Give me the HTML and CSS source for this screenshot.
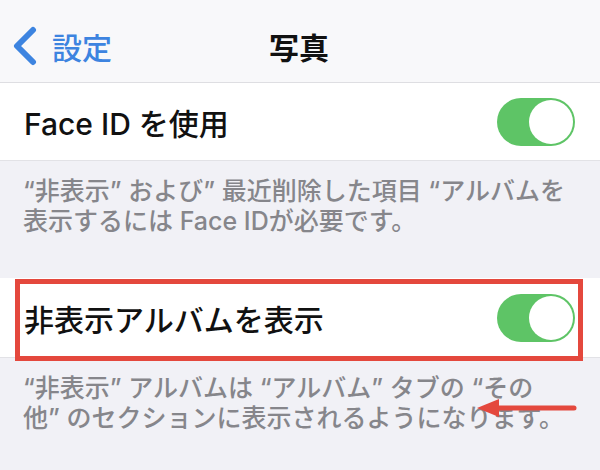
FILE: index.html
```html
<!DOCTYPE html>
<html lang="ja">
<head>
<meta charset="utf-8">
<title>写真</title>
<link rel="stylesheet" href="styles.css">
</head>
<body>
<div class="screen">
  <header class="nav">
    <div class="back">
      <svg class="chev" width="26" height="40" viewBox="0 0 26 40"><path d="M22 4 L6 20 L22 36" fill="none" stroke="#3d84e0" stroke-width="6" stroke-linecap="round" stroke-linejoin="round"/></svg>
      <span class="back-label">設定</span>
    </div>
    <h1 class="title">写真</h1>
  </header>

  <div class="cell">
    <span class="cell-label">Face ID を使用</span>
    <span class="toggle"><span class="knob"></span></span>
  </div>
  <p class="footer footer-first">“非表示” および” 最近削除した項目 “アルバムを<br>表示するには Face IDが必要です。</p>

  <div class="cell cell-second">
    <span class="cell-label">非表示アルバムを表示</span>
    <span class="toggle"><span class="knob"></span></span>
    <span class="highlight"></span>
  </div>
  <div class="footer-wrap">
    <p class="footer">“非表示” アルバムは “アルバム” タブの “その<br>他” のセクションに表示されるようになります。</p>
    <svg class="arrow" width="100" height="24" viewBox="0 0 100 24"><line x1="20" y1="12" x2="97" y2="12" stroke="#e4483d" stroke-width="5" stroke-linecap="round"/><polygon points="0,12 22,3 22,21" fill="#e4483d"/></svg>
  </div>
</div>
</body>
</html>
```

FILE: styles.css
```css
html, body {
  margin: 0;
  padding: 0;
}
body {
  background: #f1f1f6;
  font-family: "Inter", "Noto Sans CJK JP", sans-serif;
}
.screen {
  width: 600px;
  height: 470px;
  overflow: hidden;
  background: #f1f1f6;
}
.nav {
  height: 72px;
  padding-top: 10px;
  background: #f8f8fa;
  border-bottom: 1px solid #dedee2;
  display: flex;
  align-items: center;
}
.back {
  display: flex;
  align-items: center;
  padding-left: 11px;
  gap: 15px;
}
.chev {
  display: block;
}
.back-label {
  color: #3d84e0;
  font-size: 30px;
  font-weight: 500;
}
.title {
  margin: 0 0 0 157px;
  font-size: 30px;
  font-weight: 700;
  color: #111;
}
.cell {
  height: 77px;
  background: #fff;
  border-bottom: 1px solid #e2e2e6;
  display: flex;
  align-items: center;
  justify-content: space-between;
  padding: 0 25px 0 24px;
}
.cell-second {
  height: 79px;
  position: relative;
}
.cell-label {
  font-size: 30px;
  font-weight: 500;
  color: #111;
}
.toggle {
  width: 78px;
  height: 48px;
  border-radius: 24px;
  background: #5ec466;
  display: flex;
  align-items: center;
  justify-content: flex-end;
  padding: 2px;
  box-sizing: border-box;
}
.knob {
  width: 44px;
  height: 44px;
  border-radius: 50%;
  background: #fff;
}
.highlight {
  position: absolute;
  left: 15px;
  right: 17px;
  top: 1px;
  bottom: -4px;
  border: 5px solid #e4483d;
}
.footer {
  margin: 0;
  padding: 15px 0 0 23px;
  font-size: 25px;
  line-height: 30px;
  font-weight: 500;
  color: #86868b;
}
.footer-first {
  padding-bottom: 42px;
}
.footer-wrap {
  position: relative;
}
.arrow {
  position: absolute;
  left: 477px;
  top: 38px;
}
```
